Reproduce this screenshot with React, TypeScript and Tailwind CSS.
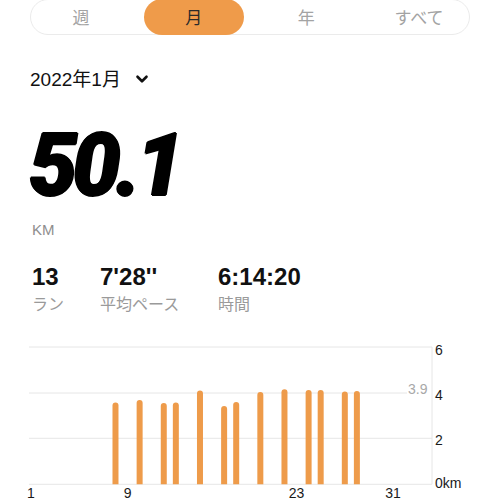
import { ChevronDown } from "lucide-react"

const tabs = ["週", "月", "年", "すべて"]

const runs = [
  { day: 8, km: 3.58 },
  { day: 10, km: 3.68 },
  { day: 12, km: 3.55 },
  { day: 13, km: 3.58 },
  { day: 15, km: 4.1 },
  { day: 17, km: 3.42 },
  { day: 18, km: 3.6 },
  { day: 20, km: 4.03 },
  { day: 22, km: 4.15 },
  { day: 24, km: 4.12 },
  { day: 25, km: 4.12 },
  { day: 27, km: 4.06 },
  { day: 28, km: 4.08 },
]

const stats = [
  { value: "13", label: "ラン", w: "w-[68px]" },
  { value: "7'28''", label: "平均ペース", w: "w-[118px]" },
  { value: "6:14:20", label: "時間", w: "w-auto" },
]

const base = 153.3
const perKm = (153.3 - 16) / 6
const dayX = (d: number) => 31 + (d - 1) * 12.07

function Chart() {
  const grid = [16, 107.3, 153.3]
  return (
    <svg width="500" height="170" viewBox="0 0 500 170" className="block">
      {grid.map((y) => (
        <line key={y} x1="29" x2="432" y1={y} y2={y} stroke="#e6e6e6" strokeWidth="1" />
      ))}
      <line x1="29" x2="407" y1="62" y2="62" stroke="#e6e6e6" strokeWidth="1" />
      <line x1="432" x2="432" y1="16" y2="153.3" stroke="#e6e6e6" strokeWidth="1" />
      {runs.map((r) => {
        const h = r.km * perKm
        const x = dayX(r.day) - 3
        const top = base - h
        return (
          <path
            key={r.day}
            d={`M${x} ${base} V${top + 3} A3 3 0 0 1 ${x + 6} ${top + 3} V${base} Z`}
            fill="#ee9b4a"
          />
        )
      })}
      <g fontFamily='"Liberation Sans", Arial, sans-serif' fontSize="14" fill="#1a1a1a">
        <text x="435" y="24">6</text>
        <text x="435" y="69">4</text>
        <text x="435" y="114">2</text>
        <text x="435" y="157">0km</text>
        <text x="31" y="167" textAnchor="middle">1</text>
        <text x="127.6" y="167" textAnchor="middle">9</text>
        <text x="296.5" y="167" textAnchor="middle">23</text>
        <text x="393" y="167" textAnchor="middle">31</text>
      </g>
      <text x="408" y="63" fontFamily='"Liberation Sans", Arial, sans-serif' fontSize="14" fill="#a8a8a8">
        3.9
      </text>
    </svg>
  )
}

export default function App() {
  return (
    <div
      className="w-[500px] h-[500px] overflow-hidden bg-white text-[#111]"
      style={{ fontFamily: '"Liberation Sans", Arial, "Noto Sans CJK JP", sans-serif' }}
    >
      <div className="mx-[30px] -mt-px h-[36px] rounded-full border border-[#ebebeb] flex items-center justify-between">
        {tabs.map((t) => (
          <div
            key={t}
            className={
              t === "月"
                ? "w-[100px] h-[36px] -my-px rounded-full bg-[#ef9b4a] flex items-center justify-center text-[17px] text-[#2a2a2a]"
                : "w-[100px] h-[36px] flex items-center justify-center text-[17px] text-[#a3a3a3]"
            }
            style={{ fontFamily: '"Noto Sans CJK JP", sans-serif' }}
          >
            {t}
          </div>
        ))}
      </div>

      <div className="mt-[32px] px-[30px] flex items-center h-[24px]">
        <span className="text-[19px] leading-[24px]">
          2022<span style={{ fontFamily: '"Noto Sans CJK JP", sans-serif' }}>年</span>1
          <span style={{ fontFamily: '"Noto Sans CJK JP", sans-serif' }}>月</span>
        </span>
        <ChevronDown className="ml-[12px] h-[18px] w-[18px]" strokeWidth={3.5} />
      </div>

      <div
        className="mt-[32px] px-[29px] text-[86px] leading-[86px] font-black italic tracking-[-5px] text-black [text-shadow:1px_0_0_#000,-1px_0_0_#000,0_1px_0_#000,0_-1px_0_#000]"
        style={{ fontFamily: "Roboto, sans-serif" }}
      >
        50.1
      </div>

      <div className="mt-[11px] px-[32px] text-[15px] leading-[20px] text-[#8e8e8e]">KM</div>

      <div className="mt-[23px] px-[32px] flex">
        {stats.map((s) => (
          <div key={s.label} className={s.w}>
            <div className="text-[24px] leading-[28px] font-semibold text-[#111]">{s.value}</div>
            <div
              className="mt-px text-[16px] leading-[22px] text-[#9a9a9a]"
              style={{ fontFamily: '"Noto Sans CJK JP", sans-serif' }}
            >
              {s.label}
            </div>
          </div>
        ))}
      </div>

      <div className="mt-[17px]">
        <Chart />
      </div>
    </div>
  )
}
